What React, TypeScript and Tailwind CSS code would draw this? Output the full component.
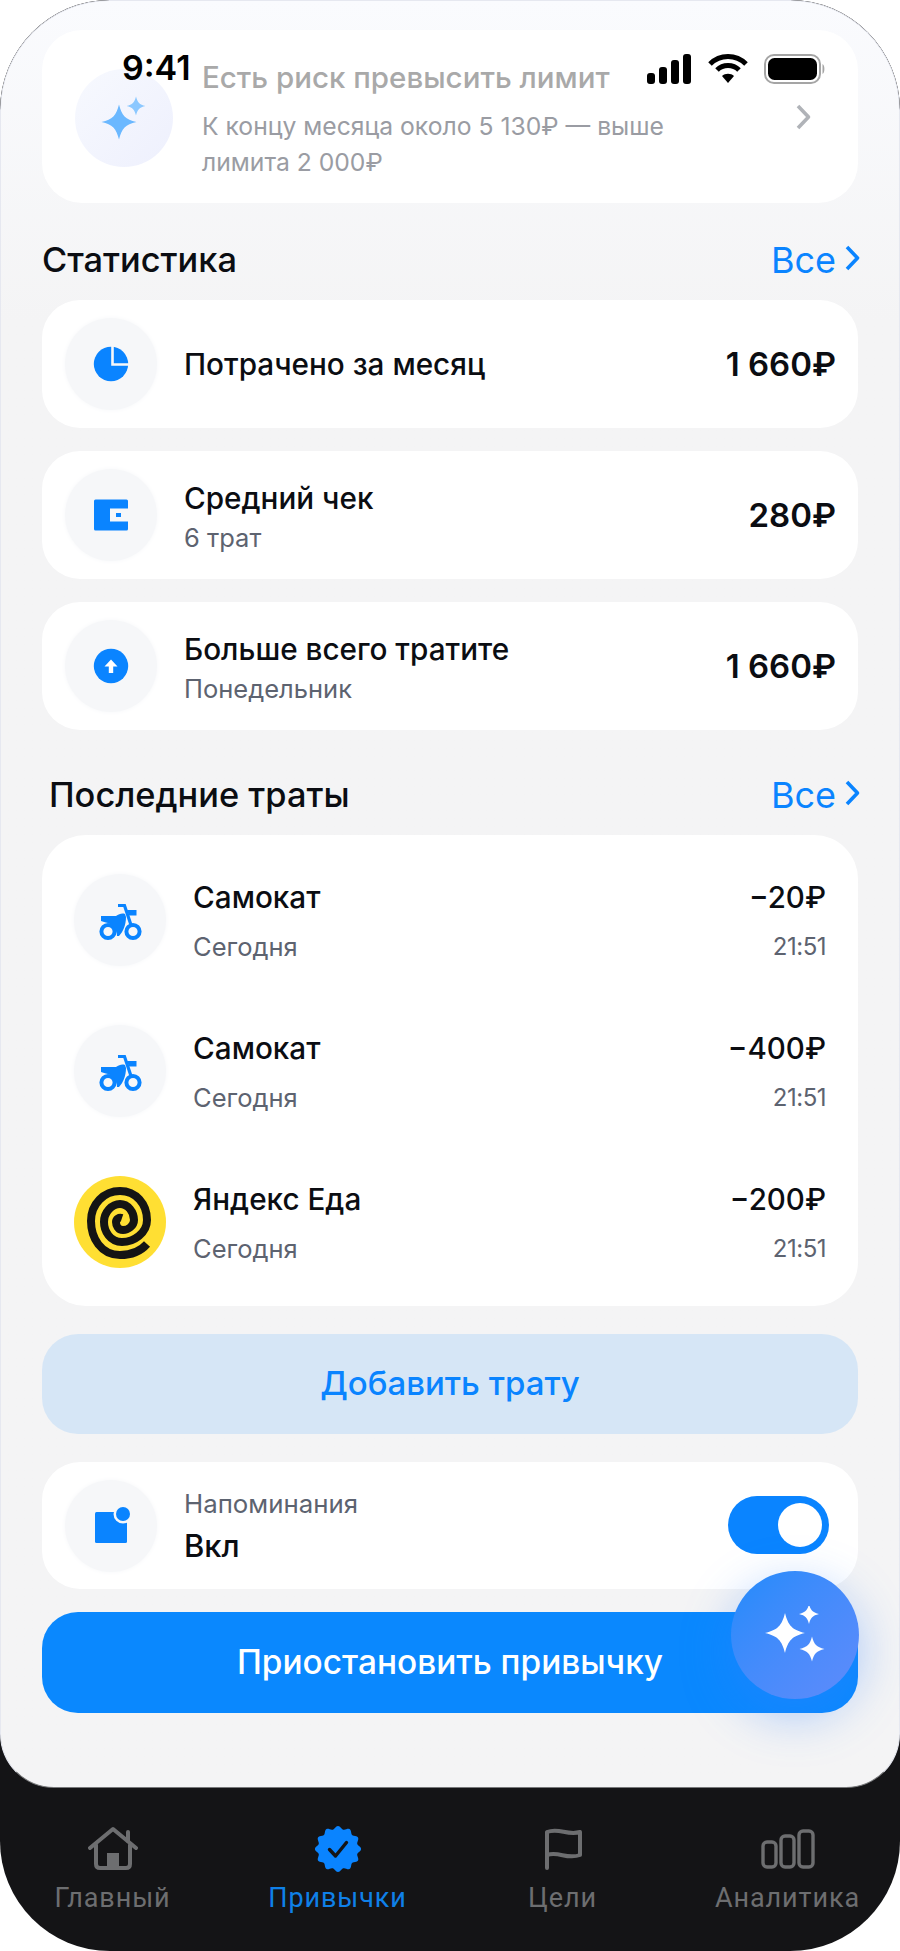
import React from 'react';

const STAR = 'M0 -10 C1.6 -3.6 3.6 -1.6 10 0 C3.6 1.6 1.6 3.6 0 10 C-1.6 3.6 -3.6 1.6 -10 0 C-3.6 -1.6 -1.6 -3.6 0 -10Z';

// scalloped badge outline for the active tab
const badgePoints = Array.from({ length: 144 }, (_, i) => {
  const a = (i / 144) * Math.PI * 2;
  const r = 21.5 + 1.6 * Math.cos(a * 12);
  return `${24 + r * Math.sin(a)},${24 - r * Math.cos(a)}`;
}).join(' ');

const Sparkles = () => (
  <svg width="46" height="44" viewBox="0 0 46 44">
    <path d={STAR} fill="#6bb8ff" transform="translate(18 26) scale(1.75)" />
    <path d={STAR} fill="#8cc8ff" transform="translate(35 10) scale(0.95)" />
  </svg>
);

const Chevron = ({ className, color }: { className: string; color: string }) => (
  <svg width="17" height="28" viewBox="0 0 17 28" fill="none" stroke={color} strokeWidth="3.6" strokeLinejoin="round" className={className}>
    <path d="M3 3 L13.5 14 L3 25" />
  </svg>
);

const PieIcon = () => (
  <svg width="36" height="36" viewBox="0 0 36 36">
    <circle cx="18" cy="18" r="17.2" fill="#0a84ff" />
    <path d="M19.5 -1 V18.5 H37" fill="none" stroke="#f6f7f9" strokeWidth="2.6" />
  </svg>
);

const WalletIcon = () => (
  <svg width="36" height="32" viewBox="0 0 36 32">
    <rect x="1" y="0.5" width="34" height="31" rx="1.5" fill="#0a84ff" />
    <rect x="17" y="9.5" width="18" height="13" fill="#f6f7f9" />
    <rect x="23" y="14" width="5" height="4" fill="#0a84ff" />
  </svg>
);

const UpIcon = () => (
  <svg width="36" height="36" viewBox="0 0 36 36">
    <circle cx="18" cy="18" r="17.2" fill="#0a84ff" />
    <path d="M18 11.5 L24.5 18.5 H20.2 V25 H15.8 V18.5 H11.5Z" fill="#fff" />
  </svg>
);

const BikeIcon = () => (
  <svg width="44" height="38" viewBox="0 0 44 38" className="mt-[3px] ml-[2px]">
    <circle cx="9" cy="28.5" r="6.6" fill="none" stroke="#0a84ff" strokeWidth="4" />
    <circle cx="34" cy="28.5" r="6.6" fill="none" stroke="#0a84ff" strokeWidth="4" />
    <path d="M2 13 H17 C20 11 23 10 26 11 L27 14 C27 22 24 29 20 33 H18 C18 27 14 22 9 20 C6 19 4 19 2 18Z" fill="#0a84ff" />
    <path d="M19 2.5 H25.5 L32 22" fill="none" stroke="#0a84ff" strokeWidth="3.2" />
    <path d="M28 7 H37.5 V12.5 H30Z" fill="#0a84ff" />
  </svg>
);

const EdaLogo = () => (
  <svg width="92" height="92" viewBox="0 0 92 92" className="shrink-0">
    <circle cx="46" cy="46" r="46" fill="#ffdf33" />
    <path
      d="M73 68 C66 76 56 79 46 79 C27 79 17 62 17 45 C17 28 30 15 46 15 C62 15 73 28 73 44 C73 57 60 66 48 66 C36 66 30 55 30 46 C30 36 38 28 46 28 C54 28 60 36 60 44 C60 50 54 54 49 54 C44 54 42 49 42 46 C42 43 45 41 48 42"
      fill="none"
      stroke="#141414"
      strokeWidth="8"
      strokeLinecap="butt"
    />
  </svg>
);

const ReminderIcon = () => (
  <svg width="40" height="40" viewBox="0 0 40 40">
    <rect x="4" y="6" width="32" height="31" rx="1.5" fill="#0a84ff" />
    <circle cx="32" cy="8" r="9.5" fill="#f6f7f9" />
    <circle cx="32" cy="8" r="7" fill="#0a84ff" />
  </svg>
);

const IconCircle = ({ children }: { children: React.ReactNode }) => (
  <div className="flex h-[92px] w-[92px] shrink-0 items-center justify-center rounded-full bg-[#f6f7f9] shadow-[0_0_5px_#f6f7f9]">
    {children}
  </div>
);

const stats = [
  { title: 'Потрачено за месяц', sub: '', value: '1 660₽', icon: <PieIcon /> },
  { title: 'Средний чек', sub: '6 трат', value: '280₽', icon: <WalletIcon /> },
  { title: 'Больше всего тратите', sub: 'Понедельник', value: '1 660₽', icon: <UpIcon /> },
];

const spends = [
  { name: 'Самокат', value: '−20₽' },
  { name: 'Самокат', value: '−400₽' },
  { name: 'Яндекс Еда', value: '−200₽' },
];

const SectionHeader = ({ title, className }: { title: string; className: string }) => (
  <div className={`flex items-center justify-between ${className}`}>
    <h2 className="text-[34.4px] leading-[40px] font-medium text-[#0b0d12]">{title}</h2>
    <div className="flex items-center gap-[8px] text-[#0a84ff]">
      <span className="text-[36px] leading-[40px]">Все</span>
      <Chevron color="#0a84ff" className="-mr-[3px] -mt-[4px]" />
    </div>
  </div>
);

const tabs = [
  {
    label: 'Главный',
    active: false,
    icon: (
      <svg width="50" height="46" viewBox="0 0 50 46" fill="none" stroke="#6d6e70" strokeWidth="4" strokeLinecap="round" strokeLinejoin="round">
        <path d="M2 22 L25 3 L48 22" />
        <path d="M40 6 V15" />
        <path d="M8 19 V38 Q8 42 12 42 H38 Q42 42 42 38 V19" />
        <rect x="19" y="27" width="12" height="14" fill="#6d6e70" stroke="none" />
      </svg>
    ),
  },
  {
    label: 'Привычки',
    active: true,
    icon: (
      <svg width="48" height="48" viewBox="0 0 48 48">
        <polygon points={badgePoints} fill="#0a84ff" />
        <path d="M15.5 24.5 L21.5 31 L32.5 17.5" fill="none" stroke="#141416" strokeWidth="3.4" strokeLinecap="round" strokeLinejoin="round" />
      </svg>
    ),
  },
  {
    label: 'Цели',
    active: false,
    icon: (
      <svg width="40" height="44" viewBox="0 0 40 44" fill="none" stroke="#6d6e70" strokeWidth="4" strokeLinecap="round" strokeLinejoin="round">
        <path d="M4 41 V5 C16 0 24 9 37 5 V28 C24 33 16 24 4 28" />
      </svg>
    ),
  },
  {
    label: 'Аналитика',
    active: false,
    icon: (
      <svg width="54" height="40" viewBox="0 0 54 40" fill="none" stroke="#6d6e70" strokeWidth="3.4">
        <rect x="2" y="13" width="13" height="25" rx="4" />
        <rect x="20" y="7" width="13" height="31" rx="4" />
        <rect x="38" y="2" width="14" height="36" rx="4" />
      </svg>
    ),
  },
];

export default function App() {
  return (
    <div className="relative h-[1951px] w-[900px] overflow-hidden bg-white font-['Inter','Noto_Sans',sans-serif]">
      <div className="flex h-full flex-col overflow-hidden rounded-[110px] bg-[#141416]">
        <main className="h-[1788px] shrink-0 overflow-hidden rounded-b-[54px] rounded-t-[110px] border border-[#e6e8f0] border-b-[#77787a] bg-gradient-to-b from-[#fafbfe] via-[#f4f4f5] via-[18%] to-[#f4f4f5] px-[41px] pt-[29px]">
          <section className="flex h-[173px] rounded-[40px] bg-white pl-[33px] pr-[46px] pt-[39px]">
            <div className="flex h-[98px] w-[98px] shrink-0 items-center justify-center rounded-full bg-gradient-to-br from-[#f7f9fe] to-[#eef0fd]">
              <Sparkles />
            </div>
            <div className="ml-[29px] flex-1 -mt-[13px]">
              <p className="text-[29.5px] leading-[42px] font-medium text-[#a9a9a9]">Есть риск превысить лимит</p>
              <p className="mt-[10px] text-[24.7px] leading-[36px] text-[#9a9ca3]">К концу месяца около 5 130₽ — выше</p>
              <p className="text-[24.7px] leading-[36px] text-[#9a9ca3]">лимита 2 000₽</p>
            </div>
            <Chevron color="#b0b3b8" className="mt-[34px]" />
          </section>

          <SectionHeader title="Статистика" className="mt-[37px] mb-[20px]" />

          <div className="flex flex-col gap-[23px]">
            {stats.map((s) => (
              <div key={s.title} className="flex h-[128px] items-center rounded-[38px] bg-white pl-[23px] pr-[22px]">
                <IconCircle>{s.icon}</IconCircle>
                <div className={s.sub ? 'ml-[27px] flex-1 pt-[2px]' : 'ml-[27px] flex-1'}>
                  <p className="text-[29.7px] leading-[38px] font-medium text-[#0b0d12]">{s.title}</p>
                  {s.sub && <p className="mt-[5px] text-[25.5px] leading-[32px] text-[#5d6370]">{s.sub}</p>}
                </div>
                <span className="text-[33px] leading-[40px] font-semibold text-[#0b0d12]">{s.value}</span>
              </div>
            ))}
          </div>

          <SectionHeader title="Последние траты" className="mt-[45px] mb-[20px] pl-[7px]" />

          <section className="flex h-[471px] flex-col gap-[59px] rounded-[44px] bg-white pl-[32px] pr-[32px] pt-[39px]">
            {spends.map((s, i) => (
              <div key={i} className="flex h-[92px] items-center">
                {i < 2 ? (
                  <IconCircle>
                    <BikeIcon />
                  </IconCircle>
                ) : (
                  <EdaLogo />
                )}
                <div className="ml-[27px] flex-1 pt-[3px]">
                  <p className="text-[29.7px] leading-[36px] font-medium text-[#0b0d12]">{s.name}</p>
                  <p className="mt-[14px] text-[25.5px] leading-[36px] text-[#5d6370]">Сегодня</p>
                </div>
                <div className="flex flex-col items-end pt-[3px]">
                  <p className="text-[29.5px] leading-[36px] font-medium text-[#0b0d12]">{s.value}</p>
                  <p className="mt-[14px] text-[24px] leading-[36px] tracking-[-0.5px] text-[#5d6370]">21:51</p>
                </div>
              </div>
            ))}
          </section>

          <button className="mt-[28px] flex h-[100px] w-full items-center justify-center rounded-[36px] bg-[#d6e6f6] text-[33px] font-medium text-[#0a84ff]">
            Добавить трату
          </button>

          <div className="mt-[28px] flex h-[127px] items-center rounded-[38px] bg-white pl-[23px] pr-[29px]">
            <IconCircle>
              <ReminderIcon />
            </IconCircle>
            <div className="ml-[27px] flex-1">
              <p className="text-[25.8px] leading-[34px] text-[#5d6370]">Напоминания</p>
              <p className="mt-[6px] text-[31px] leading-[38px] font-medium text-[#0b0d12]">Вкл</p>
            </div>
            <div className="-mt-[2px] flex h-[58px] w-[101px] items-center justify-end rounded-full bg-[#0a84ff] pr-[7px]">
              <div className="h-[44px] w-[44px] rounded-full bg-white" />
            </div>
          </div>

          <button className="mt-[23px] flex h-[101px] w-full items-center justify-center rounded-[36px] bg-[#0a88fe] text-[33.4px] font-medium text-white">
            Приостановить привычку
          </button>
        </main>

        <nav className="grid flex-1 grid-cols-4 font-['Roboto',sans-serif]">
          {tabs.map((t) => (
            <div key={t.label} className="flex flex-col items-center">
              <div className="mt-[38px] flex h-[46px] items-center justify-center">{t.icon}</div>
              <span className={`mt-[9px] text-[27px] leading-[34px] tracking-[0.9px] ${t.active ? 'text-[#0f80e8]' : 'text-[#6d6e70]'}`}>
                {t.label}
              </span>
            </div>
          ))}
        </nav>
      </div>

      {/* status bar sits over the scrolled content */}
      <div className="absolute left-[122px] top-[48px] text-[34px] leading-[40px] font-semibold text-black">9:41</div>
      <div className="absolute left-[647px] top-[54px] flex items-center gap-[16px]">
        <svg width="45" height="30" viewBox="0 0 45 30" fill="#000">
          <rect x="0" y="19" width="8" height="11" rx="3" />
          <rect x="12" y="13" width="8" height="17" rx="3" />
          <rect x="24" y="6" width="8" height="24" rx="3" />
          <rect x="36" y="0" width="8" height="30" rx="3" />
        </svg>
        <svg width="40" height="30" viewBox="0 0 40 30" fill="none" stroke="#000" strokeWidth="5">
          <path d="M2 10 C12 0 28 0 38 10" />
          <path d="M9 16 C15 10 25 10 31 16" />
          <path d="M20 29 L14 22 C17 19 23 19 26 22Z" fill="#000" stroke="none" />
        </svg>
        <svg width="62" height="30" viewBox="0 0 62 30">
          <rect x="1" y="1" width="55" height="28" rx="9" fill="none" stroke="#a5a5a5" strokeWidth="2" />
          <rect x="4" y="4" width="49" height="22" rx="6.5" fill="#000" />
          <path d="M58.5 10 C61 11 61 19 58.5 20Z" fill="#a5a5a5" />
        </svg>
      </div>

      {/* floating assistant button */}
      <div className="absolute left-[731px] top-[1571px] flex h-[128px] w-[128px] items-center justify-center rounded-full bg-gradient-to-br from-[#1f8bfb] to-[#5e8bfb] shadow-[0_16px_50px_rgba(50,130,255,0.4)]">
        <svg width="64" height="58" viewBox="0 0 64 58" fill="#fff">
          <path d={STAR} transform="translate(22 27) scale(2)" />
          <path d={STAR} transform="translate(46 8) scale(1)" />
          <path d={STAR} transform="translate(49 43) scale(1.25)" />
        </svg>
      </div>
    </div>
  );
}
